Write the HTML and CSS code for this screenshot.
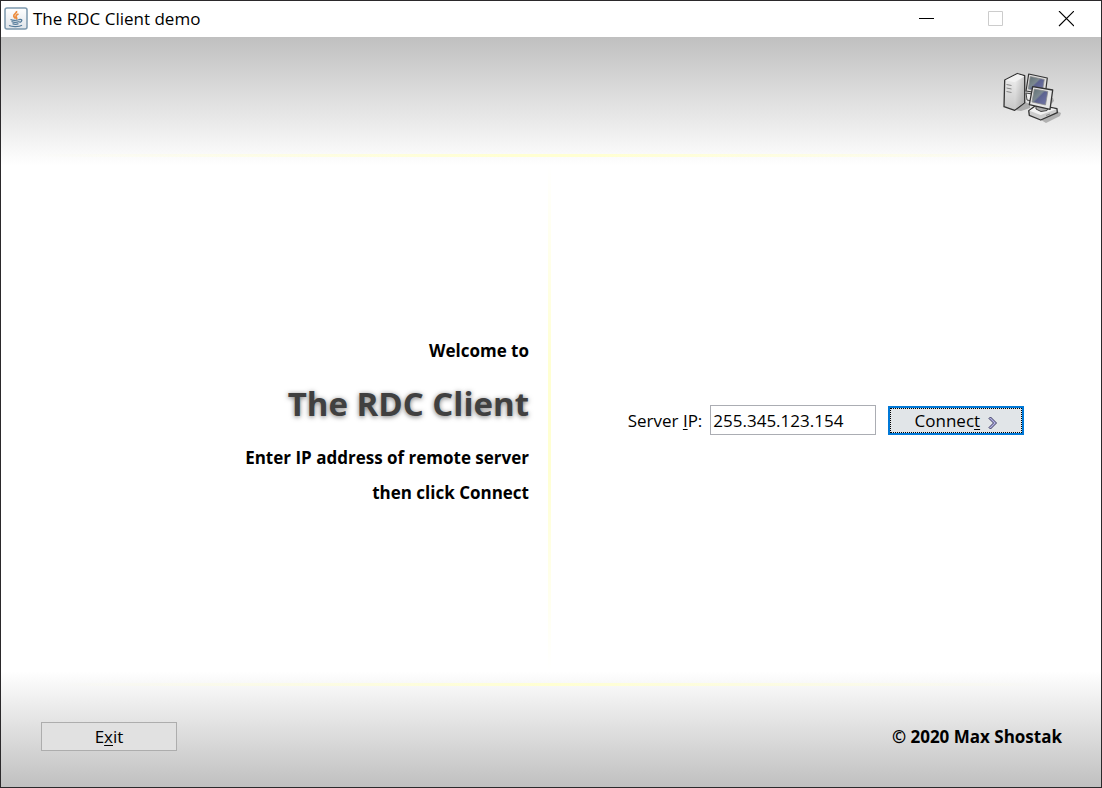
FILE: index.html
```html
<!DOCTYPE html>
<html lang="en">
<head>
<meta charset="utf-8">
<title>The RDC Client demo</title>
<link rel="stylesheet" href="styles.css">
</head>
<body>
<div class="window">
  <header class="titlebar">
    <svg class="app-icon" viewBox="0 0 24 24" aria-hidden="true">
      <defs><linearGradient id="tile" x1="0" y1="0" x2="0" y2="1"><stop offset="0" stop-color="#fff"/><stop offset="1" stop-color="#dfe4ea"/></linearGradient></defs>
      <rect x="1" y="1" width="22" height="21" rx="2" fill="url(#tile)" stroke="#7c98ad" stroke-width="1.5"/>
      <path d="M12.500 4c1 2.200-3.500 3-2.700 5.200.3 1 1.300 1.600 1.800 2.300M14.500 7c-2 .8-3.300 2-2 3.500.5.700.2 1.300-.3 1.800" fill="none" stroke="#ec8b3c" stroke-width="1.700"/>
      <path d="M6.500 12.500c2 1 6 1 9 0M7.500 14.500c2 1 5 1 8 0M8.500 16.700c2 .8 4 .8 6 0M5 18.500c3 1.500 10 1.500 13-.3M15.500 12.500c3.200-.5 3 2.300 0 3" fill="none" stroke="#547b9a" stroke-width="1.300"/>
    </svg>
    <span class="title">The RDC Client demo</span>
    <div class="window-controls">
      <button class="control" aria-label="Minimize"><svg width="16" height="16" viewBox="0 0 16 16"><path d="M1 7.500h15" stroke="#000"/></svg></button>
      <button class="control" aria-label="Maximize" disabled><svg width="16" height="16" viewBox="0 0 16 16"><path d="M.5.5h14v14H.5z" fill="none" stroke="#ccc"/></svg></button>
      <button class="control" aria-label="Close"><svg width="16" height="16" viewBox="0 0 16 16"><path d="M1 0l15 15M16 0L1 15" stroke="#000" stroke-width="1.100"/></svg></button>
    </div>
  </header>
  <div class="banner">
    <svg class="network-icon" viewBox="0 0 58 52" role="img" aria-label="Computers">
      <defs>
        <linearGradient id="side" x1="0" y1="0" x2="1" y2="1"><stop offset="0" stop-color="#f2f2f2"/><stop offset="1" stop-color="#a4a4a4"/></linearGradient>
        <linearGradient id="front" x1="0" y1="0" x2="0" y2="1"><stop offset="0" stop-color="#f0f0f0"/><stop offset="1" stop-color="#c8c8c8"/></linearGradient>
        <linearGradient id="screen" x1="0" y1="0" x2="1" y2="1"><stop offset="0" stop-color="#5f6e72"/><stop offset=".42" stop-color="#7c8990"/><stop offset=".5" stop-color="#5c6290"/><stop offset="1" stop-color="#7478a8"/></linearGradient>
      </defs>
      <path d="M12 38l10-8 5 2v4l-9 3zM38 48l16-9 4 2-1 3-14 7zM47 26l3 0 1 3-3 3z" fill="#777" opacity=".5"/>
      <path d="M23 21l6 1v7l-5-1z" fill="#eee" stroke="#444"/>
      <path d="M25.700 2l18.600 4-2 16-19.300-3z" fill="#dedede" stroke="#333" stroke-width="1.200" stroke-linejoin="round"/>
      <path d="M27.300 4.500l14 3-2 12-14-2.500z" fill="url(#screen)" stroke="#8a8a8a" stroke-width=".7"/>
      <path d="M1.700 8l12.600-6.500 7.400 2.200v27l-10 7.600L1 34.700z" fill="url(#front)" stroke="#333" stroke-width="1.300" stroke-linejoin="round"/>
      <path d="M11.700 11l9.300-6.500v26l-9.300 7z" fill="url(#side)"/>
      <path d="M2.500 8.200l12-6 6.500 2-9.300 6z" fill="#f2f2f2"/>
      <path d="M3.500 12.500l5 1M3.500 16l5 1M3.500 19.500l5 1" stroke="#888"/>
      <path d="M25.700 38.700l8-6 20.300 4 .3 4L37.700 48l-11.400-4.700z" fill="#ccc" stroke="#333" stroke-width="1.300" stroke-linejoin="round"/>
      <path d="M26.500 38.700l8-5 18.700 3.500L37.700 43z" fill="#f2f2f2"/>
      <path d="M43 43.500l4-1.500" stroke="#888"/>
      <path d="M33 34l12 2-1 2.500-6 1-5-2.500z" fill="#aaa" stroke="#444"/>
      <path d="M29.700 14.700l20 3.300-2.700 19.300-20.700-4.600z" fill="#e6e6e6" stroke="#333" stroke-width="1.300" stroke-linejoin="round"/>
      <path d="M31.300 17l13.500 2.500-2.300 13.500-13.500-3z" fill="url(#screen)" stroke="#8a8a8a" stroke-width=".7"/>
    </svg>
  </div>
  <main class="content">
    <section class="welcome">
      <p class="line">Welcome to</p>
      <h1 class="product">The RDC Client</h1>
      <p class="line">Enter IP address of remote server</p>
      <p class="line">then click Connect</p>
    </section>
    <form class="connect-form">
      <label class="ip-label" for="server-ip">Server <u>I</u>P:</label>
      <input class="ip-field" id="server-ip" type="text" value="255.345.123.154">
      <button class="button connect" type="button"><span>Connec<u>t</u></span>
        <svg class="chevrons" width="10" height="14" viewBox="0 0 10 14" aria-hidden="true"><path d="M2.500 1L8.500 7l-6 6L1 11.500 5.500 7 1 2.500z" fill="#b4b2e6" stroke="#37375c"/></svg>
      </button>
    </form>
  </main>
  <footer class="footer">
    <button class="button" type="button"><span>E<u>x</u>it</span></button>
    <p class="copyright">© 2020 Max Shostak</p>
  </footer>
</div>
</body>
</html>
```
FILE: styles.css
```css
* { box-sizing: border-box; }
body {
  margin: 0;
  font-family: "Open Sans", "Noto Sans", sans-serif;
  font-size: 17px;
  line-height: 24px;
  color: #000;
}
p, h1 { margin: 0; }
.window {
  display: flex;
  flex-direction: column;
  min-height: 100vh;
  border: 1px solid #2b292b;
  background: #fff;
}
.titlebar {
  display: flex;
  align-items: center;
  height: 36px;
  padding-left: 3px;
}
.app-icon { width: 24px; height: 24px; margin-right: 5px; }
.title { flex: 1; }
.window-controls { display: flex; }
.control {
  display: flex;
  align-items: center;
  justify-content: center;
  width: 70px;
  height: 36px;
  padding: 0;
  border: 0;
  background: none;
}
.banner {
  display: flex;
  justify-content: flex-end;
  align-items: flex-start;
  height: 128px;
  padding: 35px 40px 0;
  background:
    linear-gradient(90deg, #ffffd200 3%, #ffffd2 46%, #ffffd2 54%, #ffffd200 97%) 0 117px / 100% 3px no-repeat,
    linear-gradient(#c0c0c0, #fff);
}
.network-icon { width: 58px; height: 52px; }
.content {
  flex: 1;
  display: grid;
  grid-template-columns: 1fr 1fr;
  align-items: center;
}
.welcome {
  display: flex;
  flex-direction: column;
  justify-content: center;
  align-self: stretch;
  padding: 6px 22px 0 0;
  background: linear-gradient(#ffffd200, #ffffd2 40%, #ffffd2 60%, #ffffd200) 100% 0 / 3px 100% no-repeat;
  text-align: right;
  font-weight: 700;
}
.line { line-height: 35px; }
.product {
  font-size: 33px;
  line-height: 72px;
  color: #404040;
  text-shadow: 0 1px 5px #777;
}
.connect-form {
  display: flex;
  align-items: center;
  justify-content: center;
  padding-top: 4px;
}
.ip-label { margin-right: 8px; padding-top: 2px; }
u { text-underline-offset: 2px; text-decoration-thickness: 1px; }
.ip-field {
  width: 166px;
  height: 30px;
  margin-right: 12px;
  padding: 0 2px;
  border: 1px solid #abadb3;
  background: #fff;
  font: inherit;
}
.button {
  display: flex;
  align-items: center;
  justify-content: center;
  gap: 8px;
  width: 136px;
  height: 29px;
  padding: 2px 0 0;
  border: 1px solid #adadad;
  background: #e1e1e1;
  color: #000;
  font: inherit;
}
.connect {
  border: 2px solid #0078d7;
  background: #e1e5e8;
  outline: 1px dotted #000;
  outline-offset: -3px;
}
.chevrons { margin-top: 4px; }
.footer {
  display: flex;
  align-items: center;
  justify-content: space-between;
  height: 116px;
  padding: 14px 39px 0 40px;
  background:
    linear-gradient(90deg, #ffffd200 5%, #ffffd2 50%, #ffffd200 95%) 0 12px / 100% 3px no-repeat,
    linear-gradient(#fff, #c0c0c0);
}
.copyright { padding-top: 2px; font-weight: 700; }
```
